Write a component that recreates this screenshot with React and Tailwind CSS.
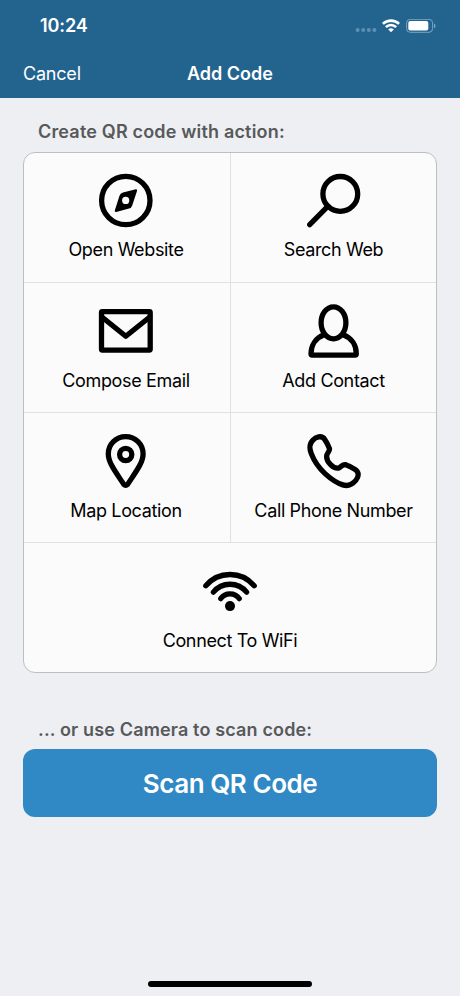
import clsx from 'clsx';

const CompassIcon = () => (
  <>
    <circle cx="27.8" cy="27.5" r="24.2" />
    <path
      d="M37.9 16.2 25 19.4Q22.2 20.2 21.4 23L16.8 37.6Q16.5 39.4 18.2 39L31 35.6Q33.4 34.9 34.2 32.4L39 18Q39.4 15.9 37.9 16.2ZM27.7 23.8a3.6 3.6 0 1 1 0 7.2a3.6 3.6 0 1 1 0-7.2Z"
      fill="currentColor"
      fillRule="evenodd"
      stroke="none"
    />
  </>
);

const SearchIcon = () => (
  <>
    <circle cx="34.3" cy="20.9" r="17.4" />
    <path d="M22 33.2 3.7 51.6" />
  </>
);

const MailIcon = () => (
  <>
    <rect x="3.5" y="8.6" width="48.7" height="38.5" rx="0.8" />
    <path d="M4.2 14.2 27.8 33.2 51.5 14.2" />
  </>
);

const ContactIcon = () => (
  <>
    <ellipse cx="27.5" cy="19.8" rx="12.4" ry="16" />
    <path d="M18 31.8C9.6 35 5 42.4 5 50.8Q5 52.2 6.2 52.2H49Q50.3 52.2 50.3 50.8C50.3 42.4 45.6 35 37.2 31.8" />
  </>
);

const PinIcon = () => (
  <>
    <path d="M27.7 3.7C18 3.7 10.3 11.4 10.3 20.9C10.3 30 18.4 40 25.8 51.4Q27.7 53.4 29.6 51.4C37 40 45.1 30 45.1 20.9C45.1 11.4 37.4 3.7 27.7 3.7Z" />
    <circle cx="27.7" cy="21.5" r="6.1" />
  </>
);

const PhoneIcon = () => (
  <path d="M6.8 7.2C9.5 4.2 15.6 1.8 18.6 6.2C19.6 7.6 22.6 13.4 23.4 15.4C24.4 18 20.6 19.8 20.6 23.4C20.6 26.6 22 29 24.6 31.6C27.2 34.2 30.2 35.8 33 34.9C35.4 34 36.4 31 39.7 31.7C41.8 32.4 47.4 35.2 49.4 36.6C53.2 39.4 52.9 43.6 49.8 47.4C46.2 51.6 41.6 53.4 36.8 51.9C31.4 50.2 25.2 46.2 19 40.6C12.6 34.6 7.8 27.4 5.2 20.4C3.2 15 3 11.4 6.8 7.2Z" />
);

const WifiIcon = () => (
  <>
    <path d="M3.8 22.8A31.6 31.6 0 0 1 52.2 22.8" />
    <path d="M11.4 29.2A21.3 21.3 0 0 1 44.6 29.2" />
    <path d="M18.8 35.6A11.2 11.2 0 0 1 37.2 35.6" />
    <circle cx="28" cy="43.1" r="5" fill="currentColor" stroke="none" />
  </>
);

const actions = [
  { label: 'Open Website', icon: CompassIcon },
  { label: 'Search Web', icon: SearchIcon },
  { label: 'Compose Email', icon: MailIcon },
  { label: 'Add Contact', icon: ContactIcon },
  { label: 'Map Location', icon: PinIcon },
  { label: 'Call Phone Number', icon: PhoneIcon },
  { label: 'Connect To WiFi', icon: WifiIcon, wide: true },
];

const StatusBar = () => (
  <div className="flex h-[50px] items-center justify-between pt-[2px] pl-10 pr-[24px]">
    <span className="text-[18px] font-semibold leading-6 tracking-[-0.1px]">10:24</span>
    <div className="flex items-center">
      <svg width="22" height="14" viewBox="0 0 22 14" className="text-[#5d90b5]" fill="currentColor">
        <circle cx="2.6" cy="11" r="2" />
        <circle cx="8.2" cy="11" r="2" />
        <circle cx="13.8" cy="11" r="2" />
        <circle cx="19.4" cy="11" r="2" />
      </svg>
      <svg width="18" height="14" viewBox="0 0 18 14" className="ml-[5px]" fill="none" stroke="currentColor" strokeWidth="2.6">
        <path d="M0.9 4.9A11.6 11.6 0 0 1 17.1 4.9" />
        <path d="M3.9 8.1A7.2 7.2 0 0 1 14.1 8.1" />
        <path d="M9 13.2 6.2 10.5A4 4 0 0 1 11.8 10.5Z" fill="currentColor" stroke="none" />
      </svg>
      <svg width="30" height="14" viewBox="0 0 30 14" className="ml-[6px]">
        <rect x="0.6" y="0.3" width="26" height="13" rx="3.6" fill="none" stroke="#7ba4c2" strokeWidth="1" />
        <rect x="2.3" y="2" width="20" height="9.6" rx="2" fill="white" />
        <path d="M28 4.6v4.6q1.6-0.8 1.6-2.3T28 4.6Z" fill="#7ba4c2" />
      </svg>
    </div>
  </div>
);

const ActionCell = ({ label, icon: Icon, wide, index }) => (
  <button
    className={clsx(
      'flex flex-col items-center pt-5',
      wide ? 'col-span-2 h-[129px]' : 'h-[130px] border-b border-[#e1e1e3]',
      !wide && index % 2 === 0 && 'pr-[2px]',
      !wide && index % 2 === 1 && 'border-l'
    )}
  >
    <svg width="56" height="56" viewBox="0 0 56 56" fill="none" stroke="currentColor" strokeWidth="5.3" strokeLinecap="round" strokeLinejoin="round">
      <Icon />
    </svg>
    <span className={clsx('whitespace-nowrap text-[18px] leading-6 tracking-[-0.36px]', index < 2 ? 'mt-[9px]' : 'mt-2.5')}>{label}</span>
  </button>
);

const App = () => (
  <div className="flex h-[996px] w-[460px] flex-col bg-[#eeeff2] font-['Inter',sans-serif] text-black">
    <header className="h-[98px] bg-[#23648f] text-white">
      <StatusBar />
      <div className="grid h-[46px] grid-cols-[1fr_auto_1fr] items-center px-[23px] text-[18px]">
        <button className="text-left tracking-[-0.2px]">Cancel</button>
        <h1 className="font-semibold">Add Code</h1>
      </div>
    </header>

    <main className="flex flex-1 flex-col px-[23px]">
      <h2 className="mt-[22px] pl-[15px] text-[18px] font-semibold leading-6 tracking-[0.18px] text-[#58595b]">Create QR code with action:</h2>
      <div className="mt-2 grid grid-cols-[206px_206px] overflow-hidden rounded-xl border border-[#bcbec2] bg-[#fbfbfb]">
        {actions.map((action, i) => (
          <ActionCell key={action.label} index={i} {...action} />
        ))}
      </div>

      <h2 className="mt-[45px] pl-[15px] text-[18px] font-semibold leading-6 tracking-[0.15px] text-[#58595b]">... or use Camera to scan code:</h2>
      <button className="mt-[7px] h-[68px] rounded-xl bg-[#3089c4] text-[26px] font-semibold tracking-[-0.45px] text-white">Scan QR Code</button>
    </main>

    {/* Home indicator */}
    <div className="mb-[9px] h-[6px] w-[164px] self-center rounded-full bg-black" />
  </div>
);

export default App;
